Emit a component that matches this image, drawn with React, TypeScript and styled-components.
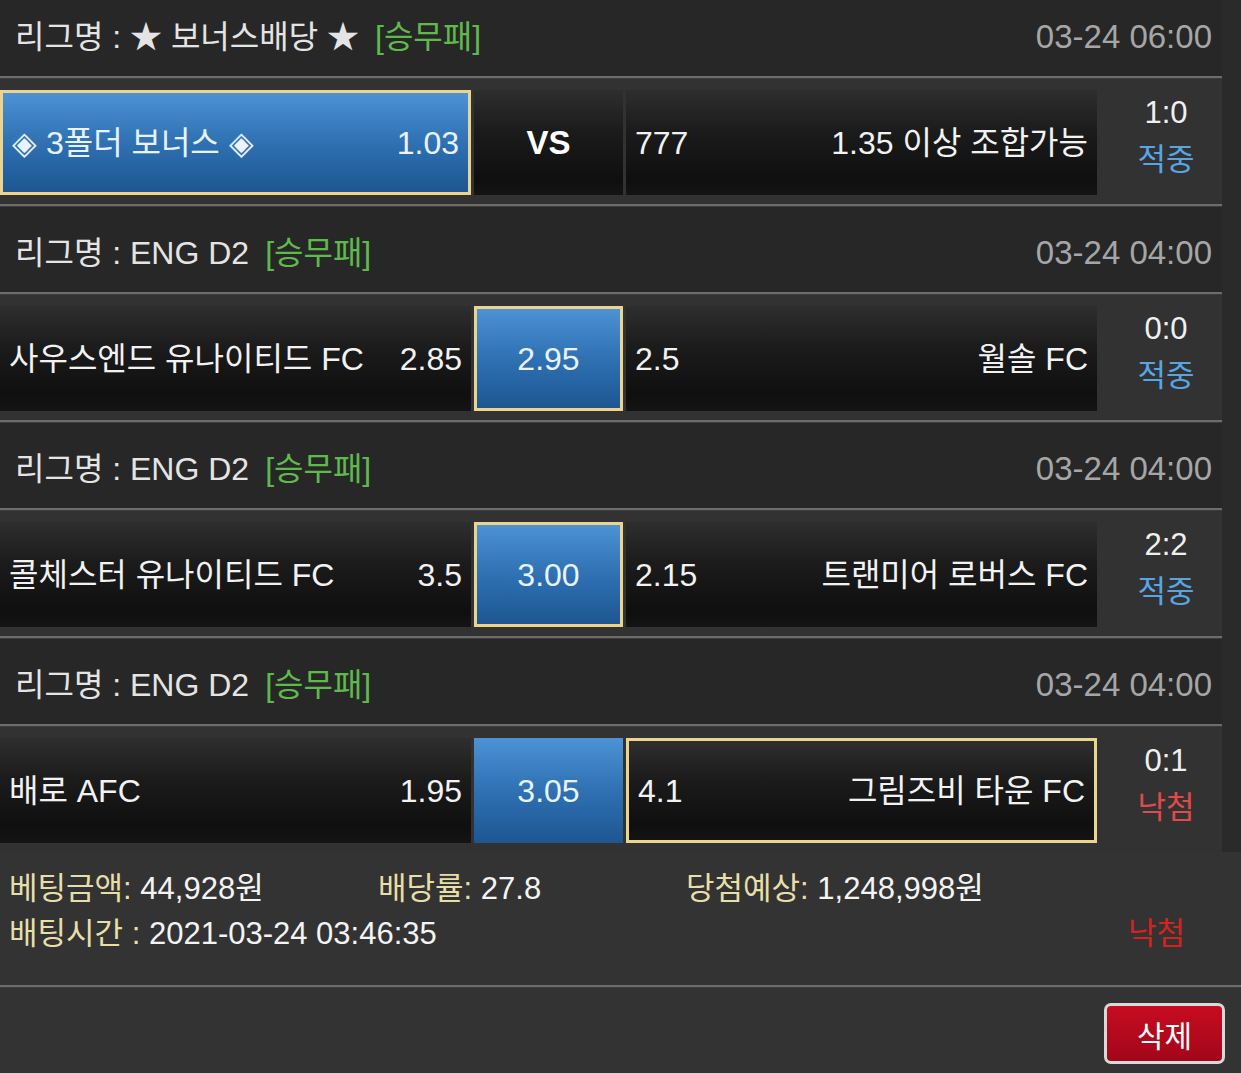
import React from "react";
import styled, { createGlobalStyle, css } from "styled-components";

const Global = createGlobalStyle`
  html, body { margin: 0; padding: 0; }
  body {
    background: #2a2a2a;
    font-family: "Liberation Sans", "Noto Sans CJK KR", Arial, sans-serif;
    color: #ececec;
    overflow: hidden;
  }
`;

const Page = styled.div`
  width: 1241px;
  height: 1073px;
  overflow: hidden;
  background: #2a2a2a;
`;

const List = styled.div`
  width: 1222px;
  margin-top: -9px;
`;

const LeagueHeader = styled.div`
  box-sizing: border-box;
  height: 85px;
  display: flex;
  align-items: center;
  justify-content: space-between;
  padding: 7px 10px 0 15px;
  background: #272727;
  font-size: 32px;
  line-height: 40px;
  color: #e4e4e4;
`;

const Tag = styled.span`
  color: #5fb94d;
  margin-left: 16px;
`;

const DateText = styled.span`
  color: #a6a6a6;
  font-size: 33px;
`;

const Divider = styled.div<{ $full?: boolean }>`
  height: 2px;
  background: #6c6c6c;
  border-bottom: 1px solid #3c3c3c;
  width: ${(p) => (p.$full ? "1241px" : "100%")};
`;

const MatchRow = styled.div`
  display: grid;
  grid-template-columns: 471px 149px 471px 1fr;
  column-gap: 3px;
  padding: 11px 0 9px;
  background: #323232;
`;

const blueFill = css`
  background: linear-gradient(#4c92d5 0%, #2f71b3 50%, #1d5692 100%);
  color: #eaf3fc;
`;

const Cell = styled.div<{ $blue?: boolean; $picked?: boolean; $center?: boolean }>`
  box-sizing: border-box;
  height: 105px;
  display: flex;
  align-items: center;
  justify-content: ${(p) => (p.$center ? "center" : "space-between")};
  padding: 0 9px;
  font-size: 32px;
  line-height: 40px;
  white-space: nowrap;
  color: #f2f2f2;
  background: linear-gradient(#2e2e2e 0%, #1b1b1b 40%, #0f0f0f 85%, #141414 100%);
  ${(p) => p.$blue && blueFill}
  ${(p) =>
    p.$picked &&
    css`
      border: 3px solid #ead48e;
    `}
`;

const Vs = styled.span`
  font-weight: bold;
  font-size: 33px;
  color: #ffffff;
`;

const Result = styled.div`
  display: flex;
  flex-direction: column;
  align-items: center;
  justify-content: flex-start;
  padding: 3px 0 0 10px;
  gap: 7px;
  font-size: 31px;
  line-height: 40px;
`;

const Score = styled.span`
  color: #f0f0f0;
`;

const Status = styled.span<{ $win: boolean }>`
  color: ${(p) => (p.$win ? "#58a5e4" : "#e04a4a")};
`;

const Summary = styled.div`
  width: 1241px;
  background: #333333;
  box-sizing: border-box;
  padding: 14px 56px 29px 9px;
  font-size: 31px;
`;

const SummaryLine = styled.div`
  display: grid;
  grid-template-columns: 369px 308px 1fr auto;
  height: 45px;
  align-items: center;
  line-height: 40px;
`;

const Label = styled.span`
  color: #e7dfa8;
`;

const Value = styled.span`
  color: #f4f4f4;
`;

const FullLine = styled.span`
  grid-column: 1 / 4;
`;

const LoseText = styled.span`
  color: #cf2420;
`;

const Footer = styled.div`
  width: 1241px;
  background: #333333;
  display: flex;
  justify-content: flex-end;
  padding: 15px 16px 20px 0;
  box-sizing: border-box;
`;

const DeleteButton = styled.button`
  width: 121px;
  height: 61px;
  padding: 0;
  border: 3px solid #d9d9d9;
  border-radius: 7px;
  background: linear-gradient(#c70c20, #a2061a);
  color: #ffffff;
  font-family: "Liberation Sans", "Noto Sans CJK KR", sans-serif;
  font-size: 30px;
  cursor: pointer;
`;

type Side = "home" | "draw" | "away";

type Match = {
  league: string;
  date: string;
  home: string;
  homeOdds: string;
  draw: string;
  awayOdds: string;
  away: string;
  picked: Side;
  blue: Side;
  score: string;
  win: boolean;
};

const matches: Match[] = [
  {
    league: "★ 보너스배당 ★",
    date: "03-24 06:00",
    home: "◈ 3폴더 보너스 ◈",
    homeOdds: "1.03",
    draw: "VS",
    awayOdds: "777",
    away: "1.35 이상 조합가능",
    picked: "home",
    blue: "home",
    score: "1:0",
    win: true,
  },
  {
    league: "ENG D2",
    date: "03-24 04:00",
    home: "사우스엔드 유나이티드 FC",
    homeOdds: "2.85",
    draw: "2.95",
    awayOdds: "2.5",
    away: "월솔 FC",
    picked: "draw",
    blue: "draw",
    score: "0:0",
    win: true,
  },
  {
    league: "ENG D2",
    date: "03-24 04:00",
    home: "콜체스터 유나이티드 FC",
    homeOdds: "3.5",
    draw: "3.00",
    awayOdds: "2.15",
    away: "트랜미어 로버스 FC",
    picked: "draw",
    blue: "draw",
    score: "2:2",
    win: true,
  },
  {
    league: "ENG D2",
    date: "03-24 04:00",
    home: "배로 AFC",
    homeOdds: "1.95",
    draw: "3.05",
    awayOdds: "4.1",
    away: "그림즈비 타운 FC",
    picked: "away",
    blue: "draw",
    score: "0:1",
    win: false,
  },
];

export default function App() {
  return (
    <Page>
      <Global />
      <List>
        {matches.map((m, i) => (
          <React.Fragment key={i}>
            <LeagueHeader>
              <span>
                리그명 : {m.league}
                <Tag>[승무패]</Tag>
              </span>
              <DateText>{m.date}</DateText>
            </LeagueHeader>
            <Divider />
            <MatchRow>
              <Cell $blue={m.blue === "home"} $picked={m.picked === "home"}>
                <span>{m.home}</span>
                <span>{m.homeOdds}</span>
              </Cell>
              <Cell
                $center
                $blue={m.blue === "draw"}
                $picked={m.picked === "draw"}
              >
                {m.draw === "VS" ? <Vs>VS</Vs> : <span>{m.draw}</span>}
              </Cell>
              <Cell $blue={m.blue === "away"} $picked={m.picked === "away"}>
                <span>{m.awayOdds}</span>
                <span>{m.away}</span>
              </Cell>
              <Result>
                <Score>{m.score}</Score>
                <Status $win={m.win}>{m.win ? "적중" : "낙첨"}</Status>
              </Result>
            </MatchRow>
            {i < matches.length - 1 && <Divider />}
          </React.Fragment>
        ))}
      </List>
      <Summary>
        <SummaryLine>
          <span>
            <Label>베팅금액: </Label>
            <Value>44,928원</Value>
          </span>
          <span>
            <Label>배당률: </Label>
            <Value>27.8</Value>
          </span>
          <span>
            <Label>당첨예상: </Label>
            <Value>1,248,998원</Value>
          </span>
          <span />
        </SummaryLine>
        <SummaryLine>
          <FullLine>
            <Label>배팅시간 : </Label>
            <Value>2021-03-24 03:46:35</Value>
          </FullLine>
          <LoseText>낙첨</LoseText>
        </SummaryLine>
      </Summary>
      <Divider $full />
      <Footer>
        <DeleteButton>삭제</DeleteButton>
      </Footer>
    </Page>
  );
}
